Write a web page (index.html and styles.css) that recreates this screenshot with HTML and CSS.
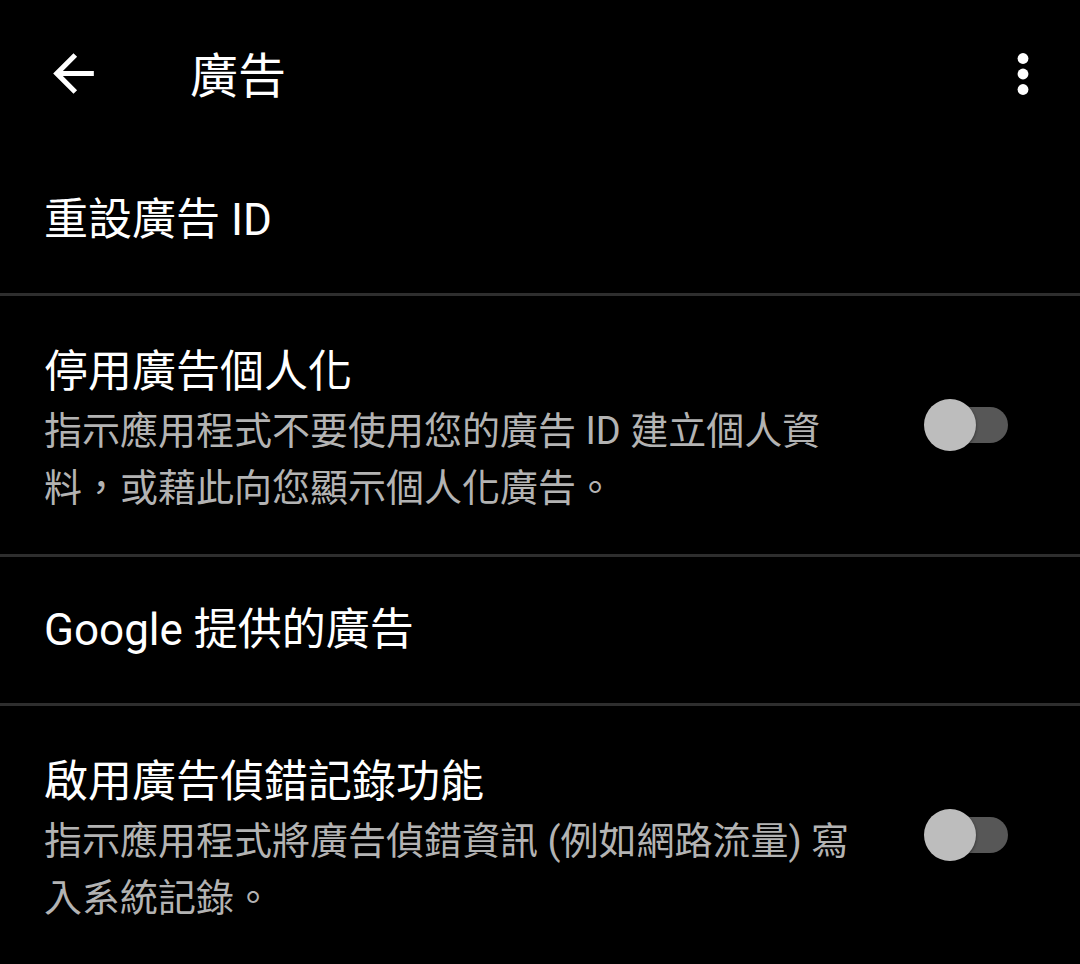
FILE: index.html
```html
<!doctype html>
<html>
<head>
<meta charset="utf-8">
<title>廣告</title>
<link rel="stylesheet" href="styles.css">
</head>
<body>
<div class="appbar">
	<svg class="icon back" viewBox="0 0 24 24"><path d="M20 11H7.83l5.59-5.59L12 4l-8 8 8 8 1.41-1.41L7.83 13H20v-2z"/></svg>
	<div class="appbar-title">廣告</div>
	<svg class="icon more" viewBox="0 0 24 24"><circle cx="12" cy="6" r="2.1"/><circle cx="12" cy="12" r="2.1"/><circle cx="12" cy="18" r="2.1"/></svg>
</div>
<ul class="list">
	<li class="item">
		<div class="item-text">
			<div class="item-title">重設廣告 ID</div>
		</div>
	</li>
	<li class="item tall">
		<div class="item-text">
			<div class="item-title">停用廣告個人化</div>
			<div class="item-sub">指示應用程式不要使用您的廣告 ID 建立個人資<br>料，或藉此向您顯示個人化廣告。</div>
		</div>
		<span class="switch"><span class="thumb"></span></span>
	</li>
	<li class="item">
		<div class="item-text">
			<div class="item-title">Google 提供的廣告</div>
		</div>
	</li>
	<li class="item tall last">
		<div class="item-text">
			<div class="item-title">啟用廣告偵錯記錄功能</div>
			<div class="item-sub">指示應用程式將廣告偵錯資訊 (例如網路流量) 寫<br>入系統記錄。</div>
		</div>
		<span class="switch"><span class="thumb"></span></span>
	</li>
</ul>
</body>
</html>
```
FILE: styles.css
```css
*{ margin:0; padding:0; list-style:none;}
body{ background:#000; color:#fff; font-family:Roboto, "Noto Sans CJK TC", sans-serif;}

.appbar{ height:147px; display:flex; align-items:center;}
.icon{ fill:#fff; display:block;}
.back{ width:61px; height:61px; margin-left:43px;}
.appbar-title{ margin-left:86px; font-size:48px; line-height:60px; margin-top:6px;}
.more{ width:62px; height:62px; margin-left:auto; margin-right:26px;}

.item{ display:flex; align-items:center; min-height:149px; box-sizing:border-box; padding:0 72px 0 44px; border-bottom:3px solid #2e2e2e;}
.item.tall{ padding-top:47px; padding-bottom:37px;}
.item.last{ border-bottom:none;}
.item-text{ flex:1;}
.item-title{ font-size:44px; line-height:58px;}
.item-sub{ font-size:38px; line-height:57px; margin-top:2px; color:#b3b3b3;}

.switch{ position:relative; width:80px; height:36px; margin-bottom:11px; border-radius:18px; background:#575757; flex-shrink:0;}
.thumb{ position:absolute; left:-4px; top:-8px; width:52px; height:52px; border-radius:50%; background:#bdbdbd; box-shadow:0 1px 3px rgba(0,0,0,.5);}
```
